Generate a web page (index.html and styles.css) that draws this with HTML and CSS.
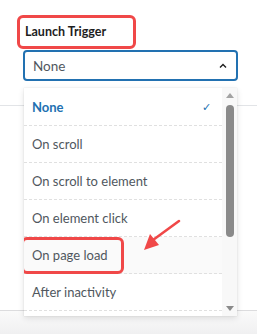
FILE: index.html
```html
<!DOCTYPE html>
<html lang="en">
<head>
	<meta charset="UTF-8">
	<title>Launch Trigger</title>
	<link rel="stylesheet" href="styles.css">
</head>
<body>
	<div class="panel">
		<div class="section">
			<div class="label">Launch Trigger</div>
			<div class="select">
				<span>None</span>
				<svg class="chev" width="8" height="5" viewBox="0 0 8 5"><path d="M1 4.5L4 1.5L7 4.5" fill="none" stroke="#1e1e1e" stroke-width="1.4"/></svg>
			</div>
		</div>
		<div class="blank"></div>
		<div class="footer"></div>

		<div class="dropdown">
			<ul class="list">
				<li class="item selected">None <span class="check">&#10003;</span></li>
				<li class="item">On scroll</li>
				<li class="item">On scroll to element</li>
				<li class="item">On element click</li>
				<li class="item hover"><span class="mark">On page load</span></li>
				<li class="item">After inactivity</li>
			</ul>
			<div class="scrollbar">
				<i class="arrow up"></i>
				<div class="thumb"></div>
				<i class="arrow down"></i>
			</div>
		</div>

		<svg class="pointer" width="50" height="40" viewBox="0 0 50 40">
			<path d="M39 3L13 22" stroke="#f04848" stroke-width="2.6" stroke-linecap="round"/>
			<path d="M4 32L10 16L19 27Z" fill="#f04848"/>
		</svg>
	</div>
</body>
</html>
```

FILE: styles.css
```css
*{
	margin: 0;
	padding: 0;
	box-sizing: border-box;
}
html,body{
	height: 100%;
}
body{
	background-color: #fff;
	font-family: Lato, "Noto Sans", sans-serif;
	overflow: hidden;
}
ul{list-style: none;}
.panel{
	position: relative;
	width: 257px;
	height: 334px;
	display: flex;
	flex-direction: column;
}
.section{
	padding: 15px 19px 24px 23px;
	border-bottom: 1px solid #e2e4e7;
}
.label{
	display: inline-block;
	margin-left: -6px;
	padding: 6px 27px 6px 5px;
	border: 3px solid #f04848;
	border-radius: 6px;
	font-size: 12.5px;
	font-weight: 700;
	line-height: 16px;
	color: #1e1e1e;
}
.select{
	margin-top: 1px;
	height: 31px;
	border: 2px solid #2271b1;
	border-radius: 4px;
	display: flex;
	align-items: center;
	justify-content: space-between;
	padding: 0 9px 0 8px;
	font-size: 13.5px;
	color: #50575e;
}
.blank{
	flex: 1;
}
.footer{
	height: 24px;
	border-top: 1px solid #dcdcde;
	background: linear-gradient(#fafafa, #f0f0f1);
}
.dropdown{
	position: absolute;
	left: 24px;
	top: 88px;
	width: 213px;
	height: 228px;
	background-color: #fff;
	box-shadow: 0 2px 6px rgba(0,0,0,.12), 0 0 1px rgba(0,0,0,.15);
	display: flex;
	overflow: hidden;
}
.list{
	flex: 1;
	padding-top: 1px;
}
.item{
	height: 37px;
	border-bottom: 1px dashed #e0e0e0;
	display: flex;
	align-items: center;
	justify-content: space-between;
	padding: 0 11px 0 8px;
	font-size: 13px;
	color: #50575e;
}
.item.selected{
	color: #2271b1;
	font-weight: 700;
}
.item.hover{
	background-color: #fafafa;
	padding-left: 0;
}
.check{
	font-size: 11px;
	font-weight: 400;
}
.mark{
	margin-left: -3px;
	padding: 6px 13px 6px 8px;
	border: 3px solid #f04848;
	border-radius: 6px;
	line-height: 19px;
}
.scrollbar{
	width: 15px;
	background-color: #f8f8f8;
	display: flex;
	flex-direction: column;
	align-items: center;
	padding: 5px 0 5px;
}
.thumb{
	width: 8px;
	flex: 1;
	margin: 7px 0 69px;
	border-radius: 4px;
	background-color: #8a8a8a;
}
.arrow{
	width: 0;
	height: 0;
	border-left: 4px solid transparent;
	border-right: 4px solid transparent;
}
.arrow.up{
	border-bottom: 5px solid #a3a3a3;
}
.arrow.down{
	border-top: 5px solid #8a8a8a;
}
.pointer{
	position: absolute;
	left: 140px;
	top: 218px;
}
```
